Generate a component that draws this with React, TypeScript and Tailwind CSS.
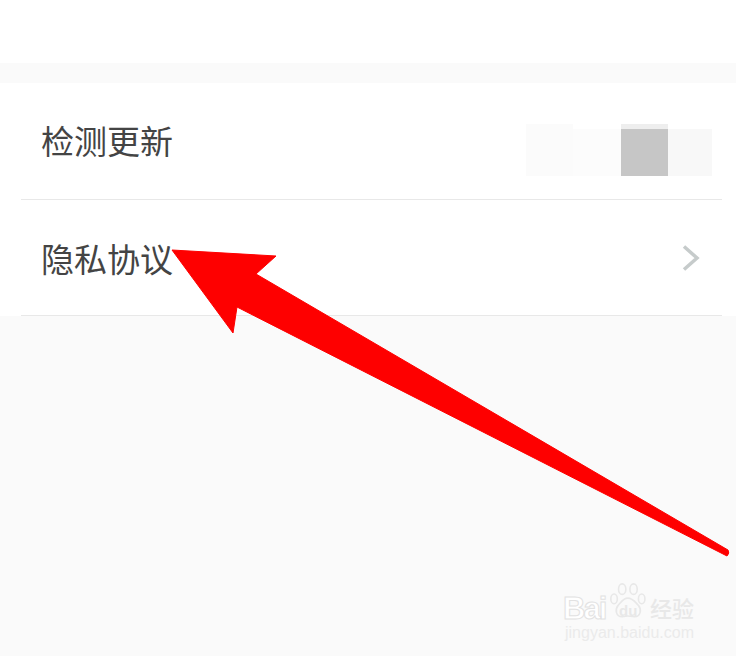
const font = { fontFamily: '"Noto Sans CJK SC", sans-serif' };
const latin = { fontFamily: '"Liberation Sans", sans-serif' };

function Watermark() {
  return (
    <div className="absolute left-[563px] top-[578px] h-[64px] w-[136px]">
      <svg className="absolute left-[47px] top-0" width="39" height="45" viewBox="0 0 48 46" fill="none" stroke="#e8e8e8" strokeWidth="2">
        <ellipse cx="5" cy="21" rx="4" ry="6" />
        <ellipse cx="15" cy="9" rx="4.5" ry="6.5" />
        <ellipse cx="29" cy="9" rx="4.5" ry="6.5" />
        <ellipse cx="39" cy="21" rx="4" ry="6" />
        <path d="M22 20c-6 0-8 5-12 9-4 5-3 14 5 14 3 0 5-1 7-1s5 1 8 1c8 0 9-9 5-14-4-4-7-9-13-9z" />
      </svg>
      <span
        className="absolute left-0 top-[15px] text-[31px] leading-[32px] font-bold tracking-[-2px] text-white [-webkit-text-stroke:1px_#e2e2e2]"
        style={latin}
      >
        Bai
      </span>
      <span className="absolute left-[56px] top-[24px] text-[15px] leading-[18px] font-bold text-[#e8e8e8]" style={latin}>
        du
      </span>
      <span
        className="absolute left-[87px] top-[13px] text-[22px] leading-[32px] font-medium text-[#e8e8e8] whitespace-nowrap"
        style={font}
      >
        经验
      </span>
      <span className="absolute left-[2px] top-[45px] text-[16px] leading-[20px] text-[#ebebeb] whitespace-nowrap" style={latin}>
        jingyan.baidu.com
      </span>
    </div>
  );
}

export default function App() {
  return (
    <div className="relative h-[656px] w-[736px] overflow-hidden bg-[#fafafa]" style={font}>
      <div className="h-[63px] bg-white" />
      <div className="h-[20px] bg-[#fafafa]" />
      <div className="bg-white pl-[21px] pr-[14px]">
        <div className="flex h-[117px] items-center justify-between border-b border-[#e8e8e8] pl-[20px] pr-[10px]">
          <span className="-mt-[2px] text-[33px] leading-[44px] text-[#444444]">检测更新</span>
          <div className="mt-[17px] flex h-[52px] items-end">
            <div className="h-[52px] w-[47px] bg-[#fbfbfb]" />
            <div className="h-[47px] w-[48px] bg-[#fcfcfc]" />
            <div className="h-[52px] w-[47px] border-t-[5px] border-[#eeeeee] bg-[#c6c6c6]" />
            <div className="h-[47px] w-[44px] bg-[#f8f8f8]" />
          </div>
        </div>
        <div className="flex h-[116px] items-center justify-between border-b border-[#e8e8e8] pl-[20px] pr-[22px]">
          <span className="text-[33px] leading-[44px] text-[#444444]">隐私协议</span>
          <svg width="18" height="26" viewBox="0 0 18 26" fill="none" stroke="#c6cbcb" strokeWidth="3.5">
            <path d="M2 1.5L15 13L2 24.5" />
          </svg>
        </div>
      </div>

      <Watermark />

      <svg className="absolute left-0 top-0" width="736" height="656" viewBox="0 0 736 656">
        <path
          d="M172 250L276 256L256 274L728 550Q730 553 727 556L237 307L233 333Z"
          fill="#fe0000"
          stroke="#fe0000"
          strokeWidth="1"
          strokeLinejoin="round"
        />
      </svg>
    </div>
  );
}
